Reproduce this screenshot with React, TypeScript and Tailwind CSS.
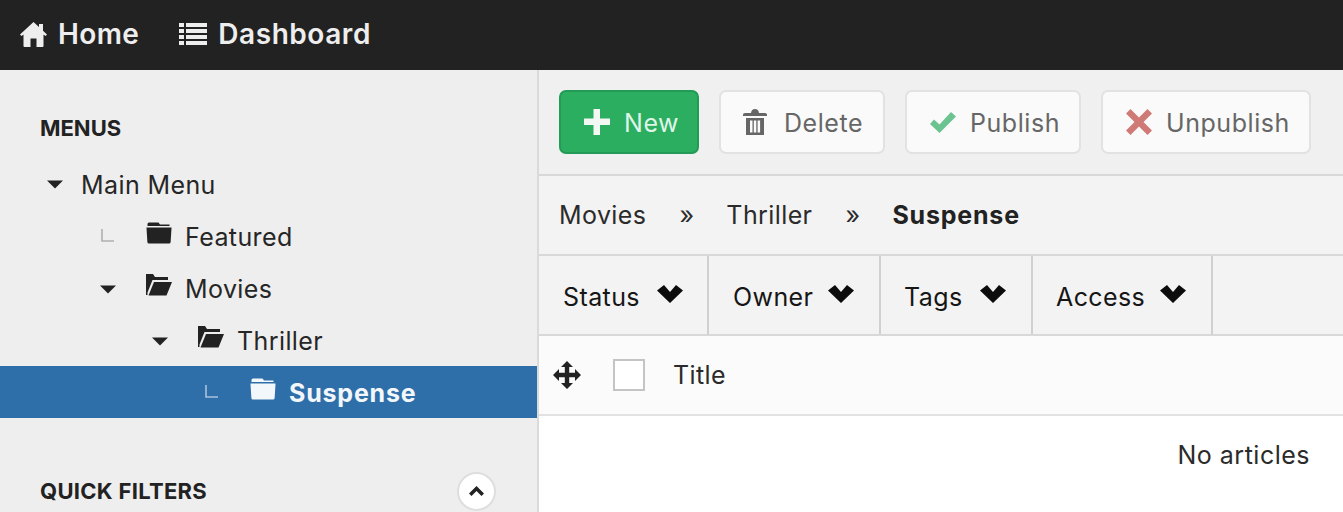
import React from "react";

const Caret = () => (
  <svg width="16" height="9" viewBox="0 0 16 9" className="block"><path d="M0 0.5H16L8 8.5Z" fill="#222" /></svg>
);
const RowCaret = () => (
  <div className="translate-y-[1px]"><Caret /></div>
);
const L = ({ c = "#b0b0b0" }: { c?: string }) => (
  <svg width="13" height="13" viewBox="0 0 13 13" className="ml-[1px] block -translate-y-[1px]"><path d="M1 0V12H13" fill="none" stroke={c} strokeWidth="1.6" /></svg>
);
const Folder = ({ c = "#222" }: { c?: string }) => (
  <svg width="26" height="22" viewBox="0 0 26 22" className="block">
    <path d="M3 0.5H12.5L14 2.5H23.5V4H1.5V2Q1.5 .5 3 .5Z" fill={c} />
    <path d="M.5 5.5H25.5L24.6 20Q24.5 21.5 23 21.5H3Q1.5 21.500 1.400 20Z" fill={c} />
  </svg>
);
const FolderOpen = ({ c = "#222" }: { c?: string }) => (
  <svg width="26" height="22" viewBox="0 0 26 22" className="block">
    <path d="M0 0H7L9 3H22V6H6.500L1.500 18.500V21H0Z" fill={c} />
    <path d="M8 8H26L20.500 21.500H2.500Z" fill={c} />
  </svg>
);
const Chevron = () => (
  <svg width="26" height="18" viewBox="0 0 26 18" className="block">
    <path d="M0 5.500L7 0L13 7L19 0L26 5.500L13 18Z" fill="#0c0c0c" />
  </svg>
);

function TreeRow({ pad, mark, icon, label, active }: { pad: string; mark: React.ReactNode; icon: React.ReactNode; label: string; active?: boolean }) {
  return (
    <div className={`flex h-[52px] items-center ${pad} ${active ? "bg-[#2f6fa9] text-[#f2f7fb] font-bold tracking-[0.8px]" : "text-[#262626]"}`}>
      <div className="flex w-[47px] shrink-0 pl-[1px]">{mark}</div>
      <div className="w-[39px] shrink-0 -translate-y-[3px]">{icon}</div>
      <span className="translate-y-[1px]">{label}</span>
    </div>
  );
}

function Btn({ icon, label, cls, gap }: { icon: React.ReactNode; label: string; cls: string; gap: string }) {
  return (
    <div className={`flex h-[64px] items-center rounded-[7px] border-2 tracking-[0.55px] ${gap} ${cls}`}>
      {icon}
      <span className="translate-y-[1px]">{label}</span>
    </div>
  );
}

function Filter({ label, w }: { label: string; w: string }) {
  return (
    <div className={`flex h-full items-center justify-between border-r-2 border-[#d0d0d0] ${w}`}>
      <span className="translate-y-[2px] text-[#161616]">{label}</span>
      <div className="-translate-y-[1px]"><Chevron /></div>
    </div>
  );
}

export default function App() {
  return (
    <div className="h-[512px] w-[1343px] overflow-hidden bg-white text-[25px] leading-none tracking-[0.4px] font-['Inter',sans-serif]">
      <header className="flex h-[70px] items-center bg-[#222222] pl-[20px] text-[28px] font-semibold text-[#eeeeee]">
        <svg width="27" height="25" viewBox="0 0 27 25" className="mr-[11px] -translate-y-[1px]">
          <path d="M13.500 0L19 5V2H23V8.700L27 12.500L25.500 14L23.500 12.500V24Q23.500 25 22.500 25H16.500V16.500H10.500V25H4.500Q3.500 25 3.500 24V12.500L1.500 14L0 12.500Z" fill="#eee" />
        </svg>
        <span className="-translate-y-[1px]">Home</span>
        <svg width="28" height="22" viewBox="0 0 28 22" className="ml-[40px] mr-[11px] -translate-y-[1px]">
          <path d="M0 0H5V4H0ZM7 0H28V4H7ZM0 6H5V10H0ZM7 6H28V10H7ZM0 12H5V16H0ZM7 12H28V16H7ZM0 18H5V22H0ZM7 18H28V22H7Z" fill="#eee" />
        </svg>
        <span className="-translate-y-[1px] tracking-[0.55px]">Dashboard</span>
      </header>
      <div className="flex h-[442px]">
        <aside className="w-[539px] shrink-0 border-r-2 border-[#dadada] bg-[#eeeeee]">
          <h2 className="pl-[40px] pt-[48px] text-[22px] leading-[20px] font-bold tracking-[0px] text-[#222]">MENUS</h2>
          <div className="mt-[20px]">
            <div className="flex h-[52px] items-center pl-[47px] text-[#262626]">
              <div className="w-[34px]"><Caret /></div>
              <span className="translate-y-[1px]">Main Menu</span>
            </div>
            <TreeRow pad="pl-[99px]" mark={<L />} icon={<Folder />} label="Featured" />
            <TreeRow pad="pl-[99px]" mark={<RowCaret />} icon={<FolderOpen />} label="Movies" />
            <TreeRow pad="pl-[151px]" mark={<RowCaret />} icon={<FolderOpen />} label="Thriller" />
            <TreeRow pad="pl-[203px]" mark={<L c="#a9c3dc" />} icon={<Folder c="#f2f7fb" />} label="Suspense" active />
          </div>
          <div className="mt-[54px] flex items-center justify-between pl-[40px] pr-[41px]">
            <h2 className="-translate-y-[1px] text-[22px] leading-[20px] font-bold tracking-[0.3px] text-[#222]">QUICK FILTERS</h2>
            <div className="flex h-[39px] w-[39px] items-center justify-center rounded-full border-2 border-[#dedede] bg-white">
              <svg width="15" height="11" viewBox="0 0 15 11"><path d="M7.500 0L15 7.500L12.500 10L7.500 5L2.500 10L0 7.500Z" fill="#222" /></svg>
            </div>
          </div>
        </aside>
        <main className="min-w-0 flex-1">
          <div className="flex h-[106px] items-start gap-[20px] border-b-2 border-[#d8d8d8] bg-[#f0f0f0] pl-[20px] pt-[20px]">
            <Btn cls="border-[#239a55] bg-[#2bae60] text-[#dff5e7] pl-[22px] w-[140px]" gap="gap-[13px]" label="New"
              icon={<svg width="28" height="28" viewBox="0 0 28 28"><path d="M10.500 1H17V10.500H27V17H17V27H10.500V17H1V10.500H10.500Z" fill="#f4f8f5" /></svg>} />
            <Btn cls="border-[#e2e2e2] bg-[#fafafa] text-[#666] pl-[22px] w-[166px]" gap="gap-[17px]" label="Delete"
              icon={<svg width="24" height="27" viewBox="0 0 24 27"><path d="M0 5.500Q0 4 2 4H8Q8.500 0 12 0T16 4H22Q24 4 24 5.500V7H0Z" fill="#666" /><path d="M3 9H21V26H3ZM7 11.500V23.500H9.500V11.500ZM10.800 11.500V23.500H13.300V11.500ZM14.600 11.500V23.500H17.100V11.500Z" fill="#666" fillRule="evenodd" /></svg>} />
            <Btn cls="border-[#e2e2e2] bg-[#fafafa] text-[#666] pl-[23px] w-[176px]" gap="gap-[14px]" label="Publish"
              icon={<svg width="26" height="21" viewBox="0 0 26 21"><path d="M0 12L4 7.500L9.500 12.500L21 0L26 4.500L9.500 21Z" fill="#6bc391" /></svg>} />
            <Btn cls="border-[#e2e2e2] bg-[#fafafa] text-[#666] pl-[23px] w-[210px]" gap="gap-[14px]" label="Unpublish"
              icon={<svg width="26" height="26" viewBox="0 0 26 26"><path d="M4.500 0L13 8.500L21.500 0L26 4.500L17.500 13L26 21.500L21.500 26L13 17.500L4.500 26L0 21.500L8.500 13L0 4.500Z" fill="#cf7a76" /></svg>} />
          </div>
          <div className="flex h-[80px] items-center border-b-2 border-[#d8d8d8] bg-[#f3f3f3] pl-[20px] text-[#2b2b2b]">
            <span>Movies</span>
            <span className="ml-[33px]">»</span>
            <span className="ml-[32px]">Thriller</span>
            <span className="ml-[33px]">»</span>
            <span className="ml-[32px] font-bold tracking-[0.8px] text-[#222]">Suspense</span>
          </div>
          <div className="flex h-[80px] items-center border-b-2 border-[#d8d8d8] bg-[#f3f3f3]">
            <Filter label="Status" w="w-[170px] pl-[24px] pr-[24px]" />
            <Filter label="Owner" w="w-[172px] pl-[24px] pr-[25px]" />
            <Filter label="Tags" w="w-[152px] pl-[23px] pr-[25px]" />
            <Filter label="Access" w="w-[180px] pl-[23px] pr-[25px]" />
          </div>
          <div className="flex h-[80px] items-center border-b-2 border-[#e2e2e2] bg-[#fbfbfb] pl-[14px] text-[#2b2b2b]">
            <svg width="28" height="28" viewBox="0 0 28 28" className="mr-[32px]">
              <path d="M14 0L20 6H16.200V11.800H22V8L28 14L22 20V16.200H16.200V22H20L14 28L8 22H11.800V16.200H6V20L0 14L6 8V11.800H11.800V6H8Z" fill="#222" />
            </svg>
            <div className="mr-[28px] h-[32px] w-[32px] border-2 border-[#c4c4c4] bg-white" />
            <span>Title</span>
          </div>
          <div className="flex justify-end pr-[33px] pt-[27px] text-[#2b2b2b] tracking-[0.5px]">No articles</div>
        </main>
      </div>
    </div>
  );
}
